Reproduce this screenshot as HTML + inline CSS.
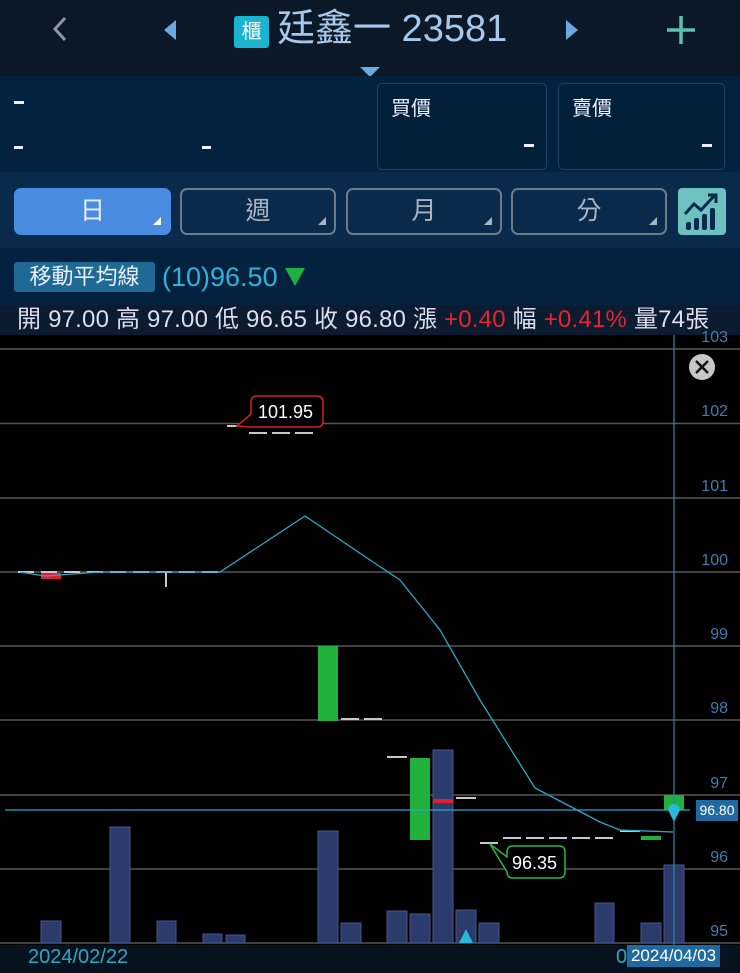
<!DOCTYPE html>
<html><head><meta charset="utf-8"><style>
*{margin:0;padding:0;box-sizing:border-box}
body{width:740px;height:973px;overflow:hidden;background:#000;font-family:"Liberation Sans","Noto Sans CJK TC",sans-serif;position:relative}
.a{position:absolute}
.top{left:0;top:0;width:740px;height:76px;background:#0b1828}
.info{left:0;top:76px;width:740px;height:96px;background:#03223f}
.box{border:1.5px solid #1d4468;border-radius:5px;top:83px;height:87px;background:#022039}
.btnrow{left:0;top:172px;width:740px;height:76px;background:#0a2a4c}
.btn{top:188px;height:47px;border:2px solid #6c7b8c;border-radius:7px;color:#aab4c0;font-size:25px;text-align:center;line-height:43px}
.tri{position:absolute;right:8px;bottom:8px;width:0;height:0;border-left:8px solid transparent;border-bottom:8px solid #aab4c0}
.ma{left:0;top:248px;width:740px;height:57px;background:#04223f}
.ohlc{left:0;top:305px;width:740px;height:30px;background:#0b1c30;color:#dde;font-size:24px;line-height:30px;padding-left:17px;white-space:nowrap;letter-spacing:0.2px}
.r{color:#e8242c}
.yl{color:#3c7eb0;font-size:16px;right:12px}
.bottom{left:0;top:945px;width:740px;height:28px;background:#06131f}
</style></head><body>
<div class="a top"></div>
<svg class="a" style="left:50px;top:16px" width="20" height="26"><path d="M15 2 L5 13 L15 24" stroke="#8a96a4" stroke-width="3" fill="none"/></svg>
<svg class="a" style="left:160px;top:18px" width="20" height="24"><path d="M16 2 L4 12 L16 22Z" fill="#6aaae0"/></svg>
<svg class="a" style="left:562px;top:18px" width="20" height="24"><path d="M4 2 L16 12 L4 22Z" fill="#6aaae0"/></svg>
<svg class="a" style="left:665px;top:14px" width="32" height="32"><path d="M16 2V30M2 16H30" stroke="#5ec0b0" stroke-width="3.5"/></svg>
<div class="a" style="left:234px;top:16px;width:35px;height:32px;background:#18b4d0;border-radius:3px;color:#fff;font-size:20px;text-align:center;line-height:32px">櫃</div>
<div class="a" style="left:277px;top:6px;color:#a8c8ea;font-size:38px;line-height:46px;white-space:nowrap">廷鑫一 23581</div>
<svg class="a" style="left:359px;top:66px" width="22" height="12"><path d="M1 1H21L11 11Z" fill="#6aaae0"/></svg>
<div class="a info"></div>
<div class="a" style="left:14px;top:101px;width:10px;height:3px;background:#eef"></div>
<div class="a" style="left:14px;top:146px;width:9px;height:3px;background:#eef"></div>
<div class="a" style="left:202px;top:146px;width:9px;height:3px;background:#eef"></div>
<div class="a box" style="left:377px;width:170px"><div class="a" style="left:13px;top:8px;color:#eef;font-size:20px">買價</div><div class="a" style="right:12px;top:60px;width:10px;height:3px;background:#eef"></div></div>
<div class="a box" style="left:558px;width:167px"><div class="a" style="left:13px;top:8px;color:#eef;font-size:20px">賣價</div><div class="a" style="right:12px;top:60px;width:10px;height:3px;background:#eef"></div></div>
<div class="a btnrow"></div>
<div class="a btn" style="left:14px;width:157px;background:#4a8de0;border-color:#4a8de0;color:#e8f0ff">日<span class="tri" style="border-bottom-color:#fff"></span></div>
<div class="a btn" style="left:180px;width:156px">週<span class="tri"></span></div>
<div class="a btn" style="left:346px;width:156px">月<span class="tri"></span></div>
<div class="a btn" style="left:511px;width:156px">分<span class="tri"></span></div>
<div class="a" style="left:678px;top:188px;width:48px;height:47px;background:#6dc2c0;border-radius:4px"></div>
<svg class="a" style="left:680px;top:190px" width="44" height="44"><g fill="#0a2a4c"><rect x="6" y="32" width="5" height="8" rx="2"/><rect x="14" y="28" width="5" height="12" rx="2"/><rect x="22" y="24" width="5" height="16" rx="2"/><rect x="30" y="18" width="5" height="22" rx="2"/></g><path d="M5 24 L14 14 L21 20 L34 6" stroke="#0a2a4c" stroke-width="3" fill="none"/><path d="M28 5H36V13" stroke="#0a2a4c" stroke-width="3" fill="none"/></svg>
<div class="a ma"></div>
<div class="a" style="left:14px;top:262px;width:141px;height:30px;background:#1f6a94;border-radius:3px;color:#e8f0ff;font-size:22px;line-height:30px;text-align:center">移動平均線</div>
<div class="a" style="left:162px;top:260px;color:#2fb2d8;font-size:27px;line-height:34px">(10)96.50</div>
<svg class="a" style="left:284px;top:267px" width="22" height="20"><path d="M1 1H21L11 19Z" fill="#20b040"/></svg>
<div class="a ohlc">開 97.00 高 97.00 低 96.65 收 96.80 漲 <span class="r">+0.40</span> 幅 <span class="r">+0.41%</span> 量74張</div>
<svg class="a" style="left:0;top:0" width="740" height="973">
<g stroke="#555" stroke-width="1.5">
<line x1="0" y1="349" x2="740" y2="349"/><line x1="0" y1="423.5" x2="740" y2="423.5"/><line x1="0" y1="498" x2="740" y2="498"/><line x1="0" y1="572" x2="740" y2="572"/><line x1="0" y1="646" x2="740" y2="646"/><line x1="0" y1="720" x2="740" y2="720"/><line x1="0" y1="795" x2="740" y2="795"/><line x1="0" y1="869" x2="740" y2="869"/><line x1="0" y1="943" x2="740" y2="943"/>
</g>
<g fill="#2b3b6c" stroke="#46568a" stroke-width="1">
<rect x="41" y="921" width="20" height="22"/><rect x="110" y="827" width="20" height="116"/><rect x="157" y="921" width="19" height="22"/><rect x="203" y="934" width="19" height="9"/><rect x="226" y="935" width="19" height="8"/><rect x="318" y="831" width="20" height="112"/><rect x="341" y="923" width="20" height="20"/><rect x="387" y="911" width="20" height="32"/><rect x="410" y="914" width="20" height="29"/><rect x="433" y="750" width="20" height="193"/><rect x="456" y="910" width="20" height="33"/><rect x="479" y="923" width="20" height="20"/><rect x="595" y="903" width="19" height="40"/><rect x="641" y="923" width="20" height="20"/><rect x="664" y="865" width="20" height="78"/>
</g>
<g stroke="#c8c8c8" stroke-width="2">
<line x1="18" y1="572" x2="220" y2="572" stroke-dasharray="16,7"/>
<line x1="166" y1="572" x2="166" y2="587"/>
<line x1="227" y1="426" x2="237" y2="426"/>
<line x1="249" y1="433" x2="315" y2="433" stroke-dasharray="18,5"/>
<line x1="341" y1="719" x2="385" y2="719" stroke-dasharray="18,5"/>
<line x1="387" y1="757" x2="407" y2="757"/>
<line x1="456" y1="798" x2="476" y2="798"/>
<line x1="480" y1="843" x2="498" y2="843"/>
<line x1="503" y1="838" x2="615" y2="838" stroke-dasharray="18,5"/>
<line x1="620" y1="831" x2="640" y2="831"/>
</g>
<rect x="41" y="573" width="20" height="6" fill="#e02030"/>
<rect x="433" y="799" width="20" height="4" fill="#e02030"/>
<rect x="318" y="646" width="20" height="75" fill="#22b03c"/>
<rect x="410" y="758" width="20" height="82" fill="#22b03c"/>
<rect x="641" y="836" width="20" height="4" fill="#22b03c"/>
<rect x="664" y="795" width="20" height="15" fill="#22b03c"/>
<polyline points="20,572 45,576 100,572 220,572 305,516 370,560 400,580 440,630 480,700 535,788 600,822 620,830 673,832" fill="none" stroke="#2aa8c8" stroke-width="1.3"/>
<line x1="5" y1="810" x2="690" y2="810" stroke="#2aa8c8" stroke-width="1.2"/>
<line x1="674" y1="335" x2="674" y2="945" stroke="#2a8aa8" stroke-width="1.2"/>
<path d="M668 810 A6 6 0 1 1 680 810 L674 822Z" fill="#2ab8d8"/>
<path d="M459 943 L466 929 L473 943Z" fill="#2ab8d8"/>
<path d="M237 426 L251 414 L251 402 Q251 396 257 396 L317 396 Q323 396 323 402 L323 421 Q323 427 317 427 L251 427Z" fill="#000" stroke="#d0202a" stroke-width="1.5"/>
<text x="258" y="418" fill="#fff" font-size="18" font-family="Liberation Sans">101.95</text>
<path d="M490 844 L507 857 L507 852 Q507 846 513 846 L559 846 Q565 846 565 852 L565 872 Q565 878 559 878 L513 878 Q507 878 507 872Z" fill="#000" stroke="#2ab83c" stroke-width="1.5"/>
<text x="512" y="869" fill="#fff" font-size="18" font-family="Liberation Sans">96.35</text>
<circle cx="702" cy="367" r="13" fill="#c8c8c8"/>
<path d="M696 361 L708 373 M708 361 L696 373" stroke="#111" stroke-width="2.5"/>
</svg>
<div class="a yl" style="top:329px">103</div>
<div class="a yl" style="top:403px">102</div>
<div class="a yl" style="top:478px">101</div>
<div class="a yl" style="top:552px">100</div>
<div class="a yl" style="top:626px">99</div>
<div class="a yl" style="top:700px">98</div>
<div class="a yl" style="top:775px">97</div>
<div class="a yl" style="top:849px">96</div>
<div class="a yl" style="top:923px">95</div>
<div class="a" style="left:696px;top:800px;width:42px;height:21px;background:#1f6aa0;color:#fff;font-size:14px;line-height:21px;text-align:center">96.80</div>
<div class="a bottom"></div>
<div class="a" style="left:28px;top:946px;color:#2aa8c8;font-size:20px">2024/02/22</div>
<div class="a" style="left:616px;top:946px;color:#2aa8c8;font-size:20px">0</div>
<div class="a" style="left:627px;top:945px;width:93px;height:22px;background:#1f6aa0;color:#fff;font-size:17px;line-height:22px;text-align:center">2024/04/03</div>
</body></html>
